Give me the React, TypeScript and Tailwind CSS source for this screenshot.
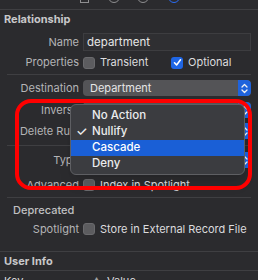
import React from "react";

const font = { fontFamily: "Inter, 'Noto Sans', sans-serif" };

function Stepper() {
  return (
    <div className="w-[13px] h-full bg-[#1f63dc] rounded-r-[4px] flex items-center justify-center">
      <svg width="7" height="11" viewBox="0 0 7 11" fill="none" stroke="#f2f2f2" strokeWidth="1.3" strokeLinecap="round" strokeLinejoin="round">
        <path d="M1 4 L3.5 1.5 L6 4" />
        <path d="M1 7 L3.5 9.5 L6 7" />
      </svg>
    </div>
  );
}

function Popup({ text }: { text: string }) {
  return (
    <div className="flex-1 h-[16px] flex rounded-[4px] bg-[#545457] overflow-hidden">
      <div className="flex-1 pl-[7px] text-[#e6e6e6] leading-[16px]">{text}</div>
      <Stepper />
    </div>
  );
}

function Check({ on }: { on?: boolean }) {
  return on ? (
    <div className="w-[12px] h-[12px] rounded-[3px] bg-[#1f66e5] flex items-center justify-center">
      <svg width="9" height="9" viewBox="0 0 9 9" fill="none" stroke="white" strokeWidth="1.6" strokeLinecap="round" strokeLinejoin="round">
        <path d="M1.5 4.8 L3.6 7 L7.5 1.8" />
      </svg>
    </div>
  ) : (
    <div className="w-[12px] h-[12px] rounded-[3px] bg-[#5c5c5f] border border-[#6a6a6d]" />
  );
}

function Row({ label, children, h, mt }: { label: string; children?: React.ReactNode; h: string; mt?: string }) {
  return (
    <div className={`flex items-center ${h} ${mt ?? ""}`}>
      <div className="w-[79px] text-right text-[#b4b4b6] whitespace-nowrap">{label}</div>
      <div className="flex-1 flex items-center ml-[4px] mr-[7px]">{children}</div>
    </div>
  );
}

export default function App() {
  return (
    <div className="w-[258px] h-[280px] bg-[#2b2b2e] overflow-hidden relative text-[11px]" style={font}>
      {/* top tab icons, only bottoms visible */}
      <div className="h-[9px] relative overflow-hidden">
        <div className="absolute left-[80px] top-[-9px] w-[9px] h-[12px] border border-[#8e8e90]" />
        <div className="absolute left-[108px] top-[-9px] w-[12px] h-[12px] rounded-full border border-[#8e8e90]" />
        <div className="absolute left-[137px] top-[-9px] w-[12px] h-[12px] rounded-full border border-[#8e8e90]" />
        <div className="absolute left-[168px] top-[-9px] w-[12px] h-[12px] rounded-full border-[1.5px] border-[#2a6df5]" />
      </div>
      <div className="h-px bg-[#3f3f42]" />
      <div className="h-[19px] flex items-center pl-[4px] font-bold text-[#c8c8ca]">Relationship</div>
      <div className="h-[4px]" />
      <Row label="Name" h="h-[18px]">
        <div className="flex-1 h-[18px] bg-[#2f2f32] border border-[#3d3d40] pl-[3px] leading-[16px] text-[#e6e6e6] text-[11.5px]">department</div>
      </Row>
      <Row label="Properties" h="h-[21px]" mt="mt-[1px]">
        <Check />
        <span className="ml-[5px] text-[#dcdcde] w-[71px]">Transient</span>
        <Check on />
        <span className="ml-[5px] text-[#dcdcde]">Optional</span>
      </Row>
      <div className="ml-[7px] mr-[7px] h-px bg-[#3f3f42] mt-[1px]" />
      <Row label="Destination" h="h-[16px]" mt="mt-[5px]">
        <Popup text="Department" />
      </Row>
      <Row label="Inverse" h="h-[16px]" mt="mt-[6px]">
        <Popup text="None" />
      </Row>
      <Row label="Delete Rule" h="h-[16px]" mt="mt-[5px]">
        <Popup text="Nullify" />
      </Row>
      <div className="ml-[7px] mr-[7px] h-px bg-[#3f3f42] mt-[6px]" />
      <Row label="Type" h="h-[16px]" mt="mt-[6px]">
        <Popup text="To One" />
      </Row>
      <Row label="Advanced" h="h-[14px]" mt="mt-[10px]">
        <Check />
        <span className="ml-[5px] text-[#dcdcde]">Index in Spotlight</span>
      </Row>
      <div className="ml-[7px] mr-[7px] h-px bg-[#3f3f42] mt-[5px]" />
      <div className="h-[24px] flex items-center pl-[13px] text-[#c0c0c2] font-medium">Deprecated</div>
      <Row label="Spotlight" h="h-[14px]">
        <Check />
        <span className="ml-[5px] text-[#dcdcde] whitespace-nowrap">Store in External Record File</span>
      </Row>
      <div className="h-px bg-[#3f3f42] mt-[15px]" />
      <div className="h-[18px] flex items-center pl-[4px] font-bold text-[#c8c8ca]">User Info</div>
      <div className="h-px bg-[#3f3f42]" />
      <div className="h-[20px] flex items-center text-[#dcdcde]">
        <span className="pl-[4px] w-[92px]">Key</span>
        <span className="w-[15px] text-[#a0a0a2] text-[9px]">▲</span>
        <span>Value</span>
      </div>

      {/* popup menu overlay */}
      <div className="absolute left-[70px] top-[104px] w-[175px] h-[71px] rounded-[6px] bg-[#3b3c40] border border-[#5e5f63] py-[3px] text-[11.5px] font-medium text-[#ececee] shadow-lg">
        <div className="h-[16px] flex items-center pl-[21px]">No Action</div>
        <div className="h-[16px] flex items-center relative pl-[21px]">
          <span className="absolute left-[5px] text-[13px]">✓</span>Nullify
        </div>
        <div className="h-[16px] flex items-center pl-[21px] bg-[#1a5fd6] text-white">Cascade</div>
        <div className="h-[16px] flex items-center pl-[21px]">Deny</div>
      </div>

      {/* red highlight ring */}
      <div className="absolute left-[15px] top-[99px] w-[237px] h-[91px] rounded-[16px] border-[4px] border-[#ff0000]" />
    </div>
  );
}
